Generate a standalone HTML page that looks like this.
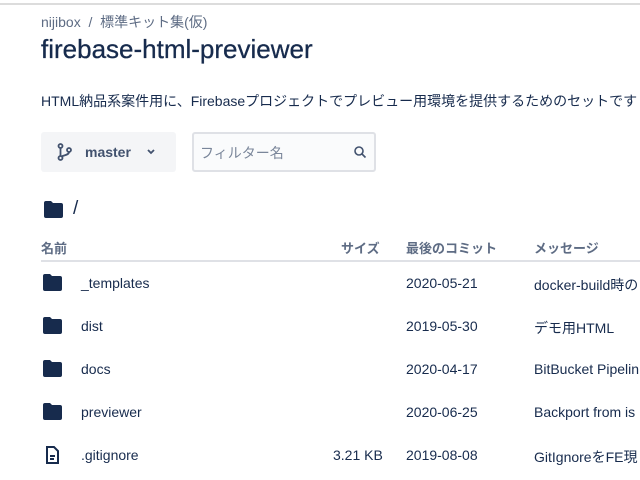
<!DOCTYPE html>
<html><head><meta charset="utf-8"><style>
*{margin:0;padding:0;box-sizing:border-box}
body{width:640px;height:480px;overflow:hidden;background:#fff;font-family:"Liberation Sans","Noto Sans CJK JP",sans-serif;color:#172b4d;position:relative}
.a{position:absolute;white-space:nowrap}
.topline{position:absolute;left:0;top:3px;width:640px;height:2px;background:#dcdcdc}
.r{font-size:14px}
</style></head><body>
<div class="topline"></div>
<div class="a" style="left:41px;top:12px;font-size:14px;color:#5e6c84">nijibox &nbsp;/&nbsp; 標準キット集(仮)</div>
<div class="a" style="left:41px;top:34px;font-size:26px;color:#172b4d;-webkit-text-stroke:0.3px #172b4d">firebase-html-previewer</div>
<div class="a" style="left:41px;top:91px;font-size:14px;color:#172b4d">HTML納品系案件用に、Firebaseプロジェクトでプレビュー用環境を提供するためのセットです</div>
<div class="a" style="left:41px;top:132px;width:135px;height:40px;background:#f4f5f7;border-radius:3px"></div>
<svg class="a" style="left:57px;top:143px" width="16" height="18" viewBox="0 0 16 18" fill="none" stroke="#42526e" stroke-width="1.8"><circle cx="3.5" cy="3" r="2"/><circle cx="3.5" cy="15" r="2"/><circle cx="12" cy="7" r="2"/><path d="M3.5 5v8M12 9c0 3-5 3-7.5 4.5"/></svg>
<div class="a" style="left:85px;top:144px;font-size:14px;font-weight:bold;color:#42526e">master</div>
<svg class="a" style="left:146px;top:148px" width="10" height="8" viewBox="0 0 10 8"><path d="M2 2l3 3 3-3" stroke="#42526e" stroke-width="1.8" fill="none"/></svg>
<div class="a" style="left:192px;top:132px;width:184px;height:40px;background:#fafbfc;border:2px solid #dfe1e6;border-radius:3px"></div>
<div class="a" style="left:200px;top:143px;font-size:14px;color:#7a869a">フィルター名</div>
<svg class="a" style="left:353px;top:145px" width="14" height="14" viewBox="0 0 14 14" fill="none" stroke="#42526e" stroke-width="1.6"><circle cx="6" cy="6" r="4"/><path d="M9 9l3.5 3.5"/></svg>
<svg class="a" style="left:43px;top:200px" width="21" height="19" viewBox="0 0 21 19"><path d="M1 3a2 2 0 0 1 2-2h5l2 2h8a2 2 0 0 1 2 2v11a2 2 0 0 1-2 2H3a2 2 0 0 1-2-2z" fill="#172b4d"/></svg>
<div class="a" style="left:73px;top:198px;font-size:19px">/</div>
<div class="a" style="left:41px;top:238px;font-size:13px;font-weight:bold;color:#5e6c84">名前</div>
<div class="a" style="left:341px;top:238px;font-size:13px;font-weight:bold;color:#5e6c84">サイズ</div>
<div class="a" style="left:406px;top:238px;font-size:13px;font-weight:bold;color:#5e6c84">最後のコミット</div>
<div class="a" style="left:534px;top:238px;font-size:13px;font-weight:bold;color:#5e6c84">メッセージ</div>
<div class="a" style="left:41px;top:260px;width:599px;height:2px;background:#dfe1e6"></div>

<svg class="a" style="left:42px;top:273px" width="21" height="19" viewBox="0 0 21 19"><path d="M1 3a2 2 0 0 1 2-2h5l2 2h8a2 2 0 0 1 2 2v11a2 2 0 0 1-2 2H3a2 2 0 0 1-2-2z" fill="#172b4d"/></svg>
<div class="a r" style="left:81px;top:275px">_templates</div>
<div class="a r" style="left:406px;top:275px">2020-05-21</div>
<div class="a r" style="left:534px;top:275px">docker-build時の</div>

<svg class="a" style="left:42px;top:316px" width="21" height="19" viewBox="0 0 21 19"><path d="M1 3a2 2 0 0 1 2-2h5l2 2h8a2 2 0 0 1 2 2v11a2 2 0 0 1-2 2H3a2 2 0 0 1-2-2z" fill="#172b4d"/></svg>
<div class="a r" style="left:81px;top:318px">dist</div>
<div class="a r" style="left:406px;top:318px">2019-05-30</div>
<div class="a r" style="left:534px;top:318px">デモ用HTML</div>

<svg class="a" style="left:42px;top:359px" width="21" height="19" viewBox="0 0 21 19"><path d="M1 3a2 2 0 0 1 2-2h5l2 2h8a2 2 0 0 1 2 2v11a2 2 0 0 1-2 2H3a2 2 0 0 1-2-2z" fill="#172b4d"/></svg>
<div class="a r" style="left:81px;top:361px">docs</div>
<div class="a r" style="left:406px;top:361px">2020-04-17</div>
<div class="a r" style="left:534px;top:361px">BitBucket Pipelin</div>

<svg class="a" style="left:42px;top:402px" width="21" height="19" viewBox="0 0 21 19"><path d="M1 3a2 2 0 0 1 2-2h5l2 2h8a2 2 0 0 1 2 2v11a2 2 0 0 1-2 2H3a2 2 0 0 1-2-2z" fill="#172b4d"/></svg>
<div class="a r" style="left:81px;top:404px">previewer</div>
<div class="a r" style="left:406px;top:404px">2020-06-25</div>
<div class="a r" style="left:534px;top:404px">Backport from is</div>

<svg class="a" style="left:45px;top:446px" width="14" height="18" viewBox="0 0 14 18" fill="none" stroke="#172b4d" stroke-width="2"><path d="M2 1h7l4 4v12H2z"/><path d="M5 10h5M5 13h4"/></svg>
<div class="a r" style="left:81px;top:447px">.gitignore</div>
<div class="a r" style="left:333px;top:447px">3.21 KB</div>
<div class="a r" style="left:406px;top:447px">2019-08-08</div>
<div class="a r" style="left:534px;top:447px">GitIgnoreをFE現</div>
</body></html>
